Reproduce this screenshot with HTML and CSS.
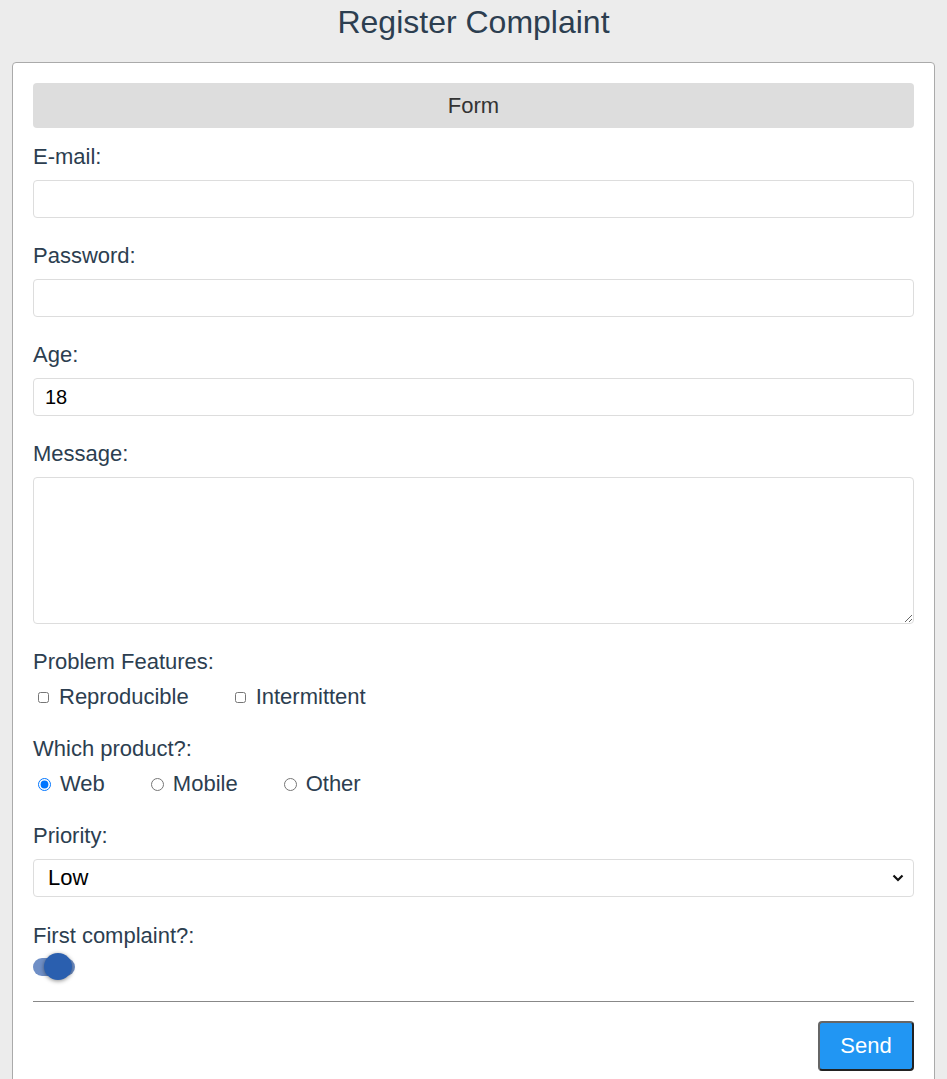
FILE: index.html
```html
<!DOCTYPE html>
<html lang="en">
<head>
<meta charset="utf-8">
<title>Register Complaint</title>
<link rel="stylesheet" href="styles.css">
</head>
<body>
<h1 class="title">Register Complaint</h1>
<form class="card">
  <div class="legend">Form</div>
  <div class="group">
    <label class="label">E-mail:</label>
    <input class="input" type="text">
  </div>
  <div class="group">
    <label class="label">Password:</label>
    <input class="input" type="password">
  </div>
  <div class="group">
    <label class="label">Age:</label>
    <input class="input" type="text" value="18">
  </div>
  <div class="group">
    <label class="label">Message:</label>
    <textarea class="textarea"></textarea>
  </div>
  <div class="group group-wide">
    <label class="label">Problem Features:</label>
    <div class="options">
      <label class="option"><input type="checkbox" class="check">Reproducible</label>
      <label class="option"><input type="checkbox" class="check">Intermittent</label>
    </div>
  </div>
  <div class="group group-wide">
    <label class="label">Which product?:</label>
    <div class="options">
      <label class="option"><input type="radio" name="p" class="radio" checked>Web</label>
      <label class="option"><input type="radio" name="p" class="radio">Mobile</label>
      <label class="option"><input type="radio" name="p" class="radio">Other</label>
    </div>
  </div>
  <div class="group group-sel">
    <label class="label">Priority:</label>
    <div class="select">
      <span class="select-value">Low</span>
      <svg class="chev" width="12" height="8" viewBox="0 0 12 8"><path d="M1.5 1.5 L6 6 L10.5 1.5" fill="none" stroke="#111" stroke-width="2.2"/></svg>
    </div>
  </div>
  <div class="group group-toggle">
    <label class="label label-tight">First complaint?:</label>
    <div class="toggle"><span class="track"></span><span class="knob"></span></div>
  </div>
  <hr class="rule">
  <div class="actions">
    <button type="button" class="send">Send</button>
  </div>
</form>
</body>
</html>
```

FILE: styles.css
```css
html, body {
  margin: 0;
  padding: 0;
}
body {
  background: #ececec;
  font-family: "Liberation Sans", Arial, sans-serif;
  color: #2c3e50;
}
.title {
  margin: 0 0 22px;
  padding-top: 4px;
  font-size: 32px;
  line-height: 36px;
  font-weight: normal;
  text-align: center;
  color: #2c3e50;
}
.card {
  margin: 0 12px;
  background: #fff;
  border: 1px solid #aaa;
  border-radius: 4px;
  padding: 20px 20px 8px;
  min-height: 1000px;
}
.legend {
  height: 45px;
  line-height: 45px;
  background: #ddd;
  border-radius: 4px;
  text-align: center;
  font-size: 22px;
  color: #333;
  margin-bottom: 17px;
}
.group {
  margin-bottom: 26px;
}
.group-wide {
  margin-bottom: 28px;
}
.group-sel {
  margin-bottom: 27px;
}
.label {
  display: block;
  font-size: 22px;
  line-height: 24px;
  margin-bottom: 11px;
}
.label-tight {
  margin-bottom: 0;
}
.input {
  display: block;
  box-sizing: border-box;
  width: 100%;
  height: 38px;
  border: 1px solid #ddd;
  border-radius: 4px;
  padding: 0 11px;
  font-family: "Liberation Sans", Arial, sans-serif;
  font-size: 20px;
  color: #000;
  outline: none;
}
.textarea {
  display: block;
  box-sizing: border-box;
  width: 100%;
  height: 147px;
  border: 1px solid #ddd;
  border-radius: 4px;
  margin: 0;
  font-family: "Liberation Sans", Arial, sans-serif;
  font-size: 20px;
  resize: vertical;
  outline: none;
}
.options {
  display: flex;
  height: 24px;
  align-items: center;
}
.option {
  display: flex;
  align-items: center;
  font-size: 22px;
  line-height: 24px;
  margin-right: 41px;
}
.check {
  margin: 0 10px 0 5px;
  width: 11px;
  height: 11px;
}
.radio {
  margin: 0 9px 0 5px;
  width: 13px;
  height: 13px;
}
.select {
  box-sizing: border-box;
  height: 38px;
  border: 1px solid #ddd;
  border-radius: 4px;
  display: flex;
  align-items: center;
  justify-content: space-between;
  padding: 0 9px 0 14px;
}
.select-value {
  font-size: 22px;
  color: #000;
}
.toggle {
  position: relative;
  width: 44px;
  height: 30px;
  margin-top: 3px;
}
.track {
  position: absolute;
  left: 0;
  top: 7px;
  width: 42px;
  height: 18px;
  border-radius: 9px;
  background: #6f8fc6;
}
.knob {
  position: absolute;
  left: 11px;
  top: 2px;
  width: 28px;
  height: 27px;
  border-radius: 50%;
  background: #2a5faf;
  box-shadow: 0 1px 4px rgba(0,0,0,0.45);
}
.group-toggle {
  margin-bottom: 20px;
}
.rule {
  border: none;
  border-top: 1px solid #888;
  margin: 0 0 19px;
}
.actions {
  display: flex;
  justify-content: flex-end;
}
.send {
  width: 96px;
  height: 50px;
  background: #2196f3;
  color: #fff;
  border: 2px solid #222;
  border-color: #666 #222 #222 #666;
  border-radius: 4px;
  font-family: "Liberation Sans", Arial, sans-serif;
  font-size: 22px;
}
```
